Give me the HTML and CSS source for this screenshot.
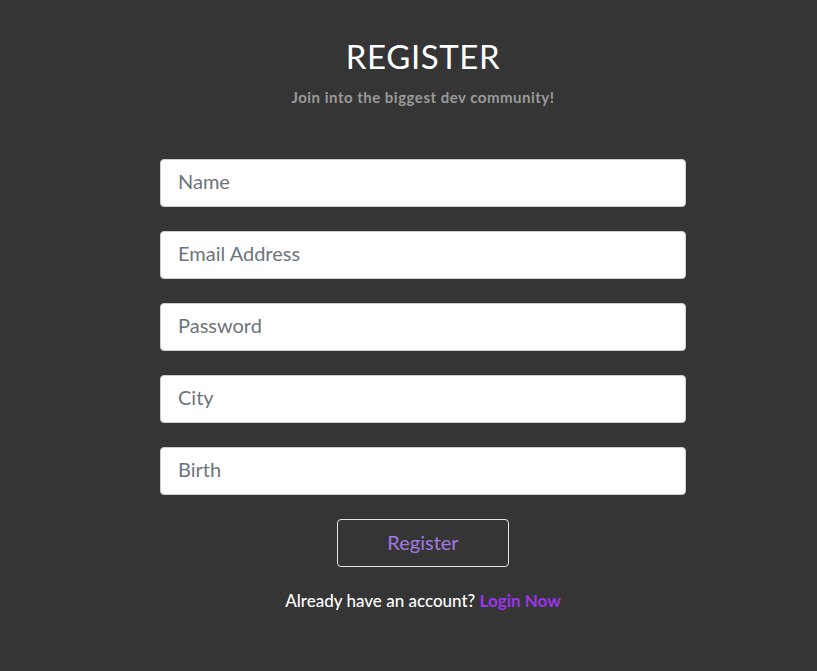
FILE: index.html
```html
<!DOCTYPE html>
<html lang="en">
<head>
<meta charset="utf-8">
<title>Register</title>
<link rel="stylesheet" href="styles.css">
</head>
<body>
<main class="page">
  <section class="register">
    <h1 class="title">REGISTER</h1>
    <p class="subtitle">Join into the biggest dev community!</p>
    <form class="form">
      <input class="field" type="text" placeholder="Name">
      <input class="field" type="email" placeholder="Email Address">
      <input class="field" type="password" placeholder="Password">
      <input class="field" type="text" placeholder="City">
      <input class="field" type="text" placeholder="Birth">
      <button class="btn" type="button">Register</button>
    </form>
    <p class="footer">Already have an account? <a class="login" href="#">Login Now</a></p>
  </section>
</main>
</body>
</html>
```
FILE: styles.css
```css
html, body {
  margin: 0;
  padding: 0;
  background: #353535;
  font-family: "Lato", "Noto Sans", sans-serif;
}
.page {
  display: flex;
  justify-content: center;
  padding-left: 29px;
  padding-top: 36px;
}
.register {
  width: 526px;
  display: flex;
  flex-direction: column;
  align-items: center;
}
.title {
  margin: 0;
  color: #ffffff;
  font-size: 33px;
  font-weight: 400;
  line-height: 40px;
  letter-spacing: 0.6px;
}
.subtitle {
  margin: 11px 0 0;
  color: #9a9a9a;
  font-size: 15px;
  line-height: 20px;
  font-weight: 700;
  letter-spacing: 0.5px;
}
.form {
  width: 100%;
  margin-top: 52px;
  display: flex;
  flex-direction: column;
  align-items: center;
  gap: 24px;
}
.field {
  box-sizing: border-box;
  width: 100%;
  height: 48px;
  border: 1px solid #cfcfcf;
  border-radius: 4px;
  background: #ffffff;
  padding: 0 17px 4px;
  font-family: inherit;
  font-size: 20px;
  color: #495057;
}
.field::placeholder {
  color: #6c757d;
}
.btn {
  width: 172px;
  height: 48px;
  background: transparent;
  border: 1px solid #e6e6e6;
  border-radius: 4px;
  padding: 0 0 3px;
  color: #a07be0;
  font-family: inherit;
  font-size: 20px;
}
.footer {
  margin: 24px 0 0;
  color: #ffffff;
  font-size: 17px;
  line-height: 20px;
  font-weight: 500;
}
.login {
  color: #9b34ea;
  font-weight: 700;
  text-decoration: none;
}
```
